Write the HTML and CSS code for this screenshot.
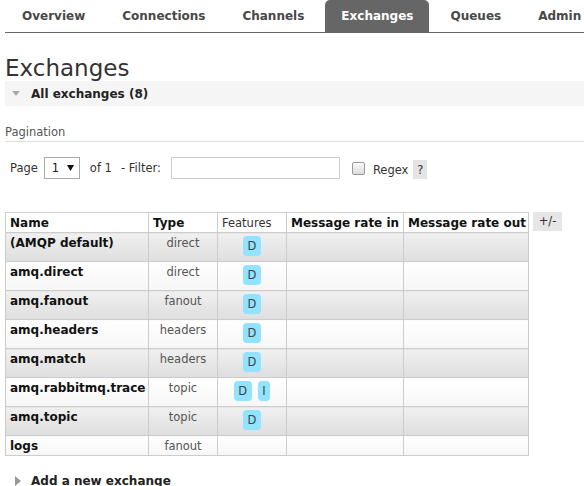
FILE: index.html
```html
<!DOCTYPE html>
<html>
<head>
<meta charset="utf-8">
<link rel="stylesheet" href="styles.css">
</head>
<body>
<nav class="nav">
  <a class="tab">Overview</a>
  <a class="tab">Connections</a>
  <a class="tab">Channels</a>
  <a class="tab active">Exchanges</a>
  <a class="tab">Queues</a>
  <a class="tab">Admin</a>
</nav>
<main class="main">
  <h1 class="title">Exchanges</h1>
  <div class="section open"><span class="tri-down"></span><span>All exchanges (8)</span></div>
  <div class="pag-title">Pagination</div>
  <div class="pag-row">
    <span class="lbl">Page</span>
    <span class="select"><span class="sel-val">1</span><svg class="sel-arrow" width="7" height="6" viewBox="0 0 7 6"><path d="M0 0H7L3.5 6Z" fill="#111"/></svg></span>
    <span class="lbl">of 1</span>
    <span class="lbl filter">- Filter:</span>
    <span class="input"></span>
    <span class="checkbox"></span>
    <span class="lbl regex">Regex</span>
    <span class="help">?</span>
  </div>
  <div class="table-wrap">
    <table class="list">
      <colgroup>
        <col class="c-name"><col class="c-type"><col class="c-feat"><col class="c-in"><col class="c-out">
      </colgroup>
      <thead>
        <tr>
          <th>Name</th><th>Type</th><th class="plain">Features</th><th>Message rate in</th><th>Message rate out</th>
        </tr>
      </thead>
      <tbody>
        <tr class="alt1"><td class="name">(AMQP default)</td><td class="type">direct</td><td class="feat"><div class="badges"><span class="badge">D</span></div></td><td></td><td></td></tr>
        <tr class="alt2"><td class="name">amq.direct</td><td class="type">direct</td><td class="feat"><div class="badges"><span class="badge">D</span></div></td><td></td><td></td></tr>
        <tr class="alt1"><td class="name">amq.fanout</td><td class="type">fanout</td><td class="feat"><div class="badges"><span class="badge">D</span></div></td><td></td><td></td></tr>
        <tr class="alt2"><td class="name">amq.headers</td><td class="type">headers</td><td class="feat"><div class="badges"><span class="badge">D</span></div></td><td></td><td></td></tr>
        <tr class="alt1"><td class="name">amq.match</td><td class="type">headers</td><td class="feat"><div class="badges"><span class="badge">D</span></div></td><td></td><td></td></tr>
        <tr class="alt2"><td class="name">amq.rabbitmq.trace</td><td class="type">topic</td><td class="feat"><div class="badges"><span class="badge">D</span><span class="badge">I</span></div></td><td></td><td></td></tr>
        <tr class="alt1"><td class="name">amq.topic</td><td class="type">topic</td><td class="feat"><div class="badges"><span class="badge">D</span></div></td><td></td><td></td></tr>
        <tr class="alt2"><td class="name">logs</td><td class="type">fanout</td><td class="feat"></td><td></td><td></td></tr>
      </tbody>
    </table>
    <span class="toggle">+/-</span>
  </div>
  <div class="section closed"><span class="tri-right"></span><span>Add a new exchange</span></div>
</main>
</body>
</html>
```
FILE: styles.css
```css
html, body {
  margin: 0;
  padding: 0;
  overflow: hidden;
  background: #fff;
}
body {
  font-family: "DejaVu Sans", Verdana, sans-serif;
  font-size: 11.5px;
  color: #444;
}
.nav {
  display: flex;
  margin-left: 5px;
  padding-left: 1px;
  height: 32px;
  border-bottom: 1px solid #666;
  overflow: hidden;
}
.tab {
  flex: none;
  padding: 1px 16px 0;
  margin-right: 5px;
  line-height: 31px;
  font-weight: bold;
  font-size: 12px;
  color: #484848;
  border-radius: 5px 5px 0 0;
}
.tab.active {
  background: #666;
  color: #fff;
}
.main {
  padding-left: 5px;
}
.title {
  margin: 22px 0 0;
  font-size: 23px;
  line-height: 26px;
  font-weight: normal;
  color: #333;
}
.section {
  height: 25px;
  display: flex;
  align-items: center;
  padding-left: 7px;
  font-weight: bold;
  font-size: 12px;
  color: #222;
}
.section.open {
  background: #f5f5f5;
}
.section.closed {
  margin-top: 12px;
}
.tri-down {
  width: 0;
  height: 0;
  border-left: 4px solid transparent;
  border-right: 4px solid transparent;
  border-top: 5px solid #aaa;
  margin-right: 11px;
}
.tri-right {
  width: 0;
  height: 0;
  border-top: 5px solid transparent;
  border-bottom: 5px solid transparent;
  border-left: 6px solid #999;
  margin: 0 10px 0 3px;
}
.pag-title {
  margin-top: 19px;
  line-height: 15px;
  padding-bottom: 1px;
  border-bottom: 1px solid #ddd;
  color: #555;
}
.pag-row {
  display: flex;
  align-items: center;
  height: 22px;
  margin-top: 15px;
  padding-left: 5px;
  color: #333;
}
.select {
  box-sizing: border-box;
  width: 36px;
  height: 22px;
  border: 1px solid #aaa;
  margin: 0 10px 0 6px;
  display: flex;
  align-items: center;
  justify-content: space-between;
  padding: 0 5px 0 7px;
  color: #222;
}
.filter {
  margin-left: 9px;
}
.input {
  box-sizing: border-box;
  width: 169px;
  height: 22px;
  border: 1px solid #ccc;
  margin-left: 10px;
}
.checkbox {
  box-sizing: border-box;
  width: 13px;
  height: 13px;
  border: 1px solid #999;
  border-radius: 2px;
  background: linear-gradient(#fafafa, #dcdcdc);
  margin: 0 8px 0 12px;
}
.regex {
  margin-top: 3px;
}
.help {
  width: 14px;
  height: 19px;
  background: #e4e4e4;
  display: flex;
  align-items: center;
  justify-content: center;
  margin: 3px 0 0 5px;
  color: #333;
}
.table-wrap {
  display: flex;
  align-items: flex-start;
  margin-top: 33px;
}
.list {
  border-collapse: collapse;
  table-layout: fixed;
  width: 523px;
}
.c-name { width: 143px; }
.c-type { width: 69px; }
.c-feat { width: 69px; }
.c-in { width: 117px; }
.c-out { width: 125px; }
.list th, .list td {
  border: 1px solid #ccc;
  padding: 2px 4px 0;
  line-height: 17px;
  vertical-align: top;
  white-space: nowrap;
  overflow: hidden;
}
.list th {
  text-align: left;
  font-weight: bold;
  font-size: 12px;
  color: #111;
  background: #fff;
}
.list th.plain {
  font-weight: normal;
  font-size: 11.5px;
  color: #333;
}
.list td.name {
  font-weight: bold;
  font-size: 12px;
  color: #111;
}
.list td.type {
  text-align: center;
  color: #555;
}
.alt1 td {
  background: linear-gradient(#f0f0f0, #dedede);
}
.alt2 td {
  background: linear-gradient(#ffffff, #f6f6f6);
}
.badges {
  display: flex;
  justify-content: center;
  gap: 6px;
  padding: 1px 0 5px;
}
.badge {
  display: block;
  height: 20px;
  line-height: 20px;
  padding: 0 4.5px;
  border-radius: 4px;
  background: #91e3ff;
  color: #444;
}
.toggle {
  margin-left: 4px;
  width: 29px;
  height: 19px;
  line-height: 19px;
  text-align: center;
  background: #e6e6e6;
  color: #333;
}
```
